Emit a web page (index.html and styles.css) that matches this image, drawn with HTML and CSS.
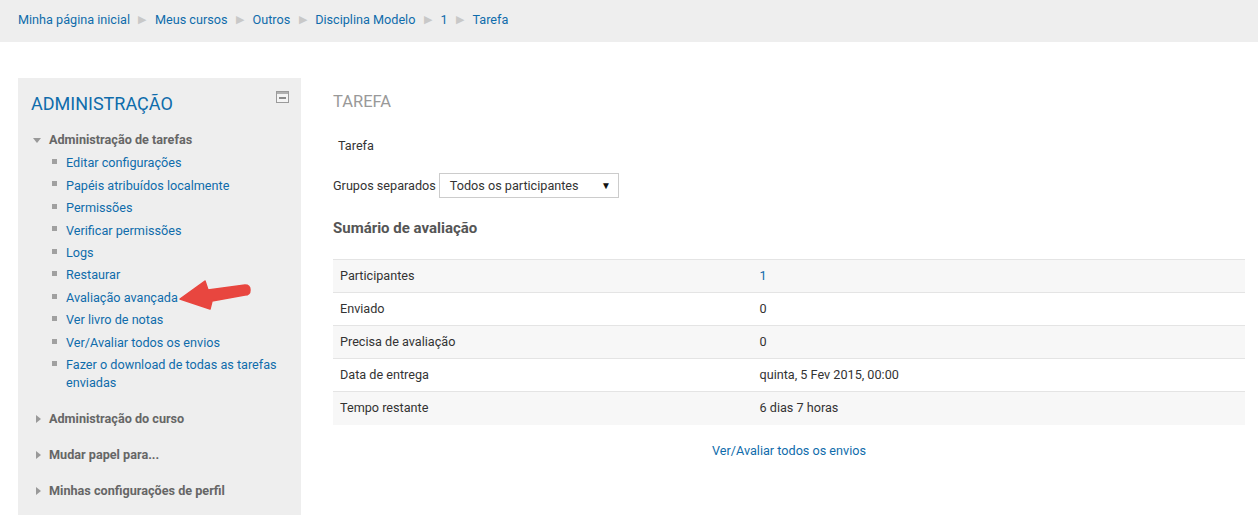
FILE: index.html
```html
<!DOCTYPE html>
<html lang="pt">
<head>
<meta charset="utf-8">
<title>Tarefa</title>
<link rel="stylesheet" href="styles.css">
</head>
<body>
<header class="navbar">
  <nav class="breadcrumb">
    <a href="#">Minha página inicial</a><span class="sep">&#9654;</span>
    <a href="#">Meus cursos</a><span class="sep">&#9654;</span>
    <a href="#">Outros</a><span class="sep">&#9654;</span>
    <a href="#">Disciplina Modelo</a><span class="sep">&#9654;</span>
    <a href="#">1</a><span class="sep">&#9654;</span>
    <a href="#">Tarefa</a>
  </nav>
</header>
<div class="page">
  <aside class="block">
    <div class="block-head">
      <h2 class="block-title">Administração</h2>
      <svg class="block-hide" width="13" height="12" viewBox="0 0 13 12"><rect x="0.5" y="0.5" width="12" height="11" fill="#f4f4f4" stroke="#9a9a9a"/><rect x="1" y="1" width="11" height="2" fill="#b0b0b0"/><rect x="3" y="6" width="7" height="2" fill="#8a8a8a"/></svg>
    </div>
    <ul class="tree">
      <li class="branch open">
        <span class="branch-label"><span class="tri down"></span>Administração de tarefas</span>
        <ul class="leaves">
          <li><a href="#">Editar configurações</a></li>
          <li><a href="#">Papéis atribuídos localmente</a></li>
          <li><a href="#">Permissões</a></li>
          <li><a href="#">Verificar permissões</a></li>
          <li><a href="#">Logs</a></li>
          <li><a href="#">Restaurar</a></li>
          <li class="annotated"><a href="#">Avaliação avançada</a>
            <svg class="arrow" width="82" height="40" viewBox="0 0 82 40"><path d="M8 26 L33 8 L36 17 L73 12 Q78 12 78 17 Q78 22 73 22 L40 28 L38 36 Z" fill="#e8463f" stroke="#e8463f" stroke-width="1.5" stroke-linejoin="round"/></svg>
          </li>
          <li><a href="#">Ver livro de notas</a></li>
          <li><a href="#">Ver/Avaliar todos os envios</a></li>
          <li><a href="#">Fazer o download de todas as tarefas enviadas</a></li>
        </ul>
      </li>
      <li class="branch"><span class="branch-label"><span class="tri right"></span>Administração do curso</span></li>
      <li class="branch"><span class="branch-label"><span class="tri right"></span>Mudar papel para...</span></li>
      <li class="branch"><span class="branch-label"><span class="tri right"></span>Minhas configurações de perfil</span></li>
    </ul>
  </aside>
  <main class="main">
    <h1 class="page-title">Tarefa</h1>
    <p class="intro">Tarefa</p>
    <div class="groups">
      <label class="groups-label">Grupos separados</label>
      <div class="select"><span>Todos os participantes</span><span class="caret">&#9660;</span></div>
    </div>
    <h3 class="summary-title">Sumário de avaliação</h3>
    <table class="summary">
      <tr><td>Participantes</td><td><a href="#">1</a></td></tr>
      <tr><td>Enviado</td><td>0</td></tr>
      <tr><td>Precisa de avaliação</td><td>0</td></tr>
      <tr><td>Data de entrega</td><td>quinta, 5 Fev 2015, 00:00</td></tr>
      <tr><td>Tempo restante</td><td>6 dias 7 horas</td></tr>
    </table>
    <div class="view-all"><a href="#">Ver/Avaliar todos os envios</a></div>
  </main>
</div>
</body>
</html>
```
FILE: styles.css
```css
html, body {
  margin: 0;
  padding: 0;
  background: #fff;
}
body {
  font-family: Roboto, "Liberation Sans", Arial, sans-serif;
  font-size: 12.65px;
  color: #333;
  width: 1258px;
  overflow: hidden;
}
a {
  color: #0f6cab;
  text-decoration: none;
}
.navbar {
  background: #eeeeee;
  height: 42px;
  padding: 0 18px;
  display: flex;
  align-items: center;
  box-sizing: border-box;
}
.breadcrumb {
  display: flex;
  align-items: center;
  line-height: 18px;
  margin-top: -2px;
}
.sep {
  color: #c8c8c8;
  font-size: 11px;
  margin: 0 8.5px;
}
.page {
  display: flex;
  gap: 32px;
  padding: 36px 13px 0 18px;
}
.block {
  width: 283px;
  flex: none;
  background: #eeeeee;
  padding: 13px 13px 10px 13px;
  box-sizing: border-box;
  height: 437px;
}
.block-head {
  display: flex;
  justify-content: space-between;
  align-items: flex-start;
}
.block-title {
  margin: 0;
  font-size: 18px;
  font-weight: 400;
  text-transform: uppercase;
  color: #0f6cab;
  line-height: 26px;
}
.block-hide {
  margin: 0 -1px 0 0;
}
.tree, .leaves {
  list-style: none;
  margin: 0;
  padding: 0;
}
.tree {
  margin-top: 14px;
}
.branch-label {
  display: flex;
  align-items: center;
  font-weight: 700;
  color: #666;
  line-height: 18px;
  margin-left: 2px;
}
.tri {
  display: inline-block;
  width: 0;
  height: 0;
}
.tri.down {
  border-left: 4.5px solid transparent;
  border-right: 4.5px solid transparent;
  border-top: 5px solid #999;
  margin-right: 8px;
}
.tri.right {
  border-top: 4.5px solid transparent;
  border-bottom: 4.5px solid transparent;
  border-left: 5px solid #999;
  margin-left: 3px;
  margin-right: 8px;
}
.branch {
  padding: 0 0 18px 0;
}
.branch.open {
  padding-bottom: 16px;
}
.branch:last-child {
  padding-bottom: 0;
}
.leaves {
  margin-top: 3px;
}
.leaves li {
  position: relative;
  padding: 2.2px 0 2.25px 35px;
  line-height: 18px;
}
.leaves li::before {
  content: "";
  position: absolute;
  left: 21px;
  top: 7px;
  width: 5px;
  height: 5px;
  background: #a0a0a0;
}
.annotated .arrow {
  position: absolute;
  left: 141px;
  top: -14px;
}
.main {
  flex: 1;
  min-width: 0;
}
.page-title {
  margin: 13px 0 0 0;
  font-size: 16.5px;
  font-weight: 400;
  text-transform: uppercase;
  color: #999;
  line-height: 22px;
}
.intro {
  margin: 24px 0 0 5px;
  line-height: 18px;
}
.groups {
  display: flex;
  align-items: center;
  margin-top: 18px;
}
.groups-label {
  margin-right: 3px;
}
.select {
  width: 180px;
  height: 25px;
  box-sizing: border-box;
  border: 1px solid #ccc;
  display: flex;
  align-items: center;
  justify-content: space-between;
  padding: 0 7px 0 10px;
  background: #fff;
  color: #333;
}
.caret {
  font-size: 10px;
  color: #111;
}
.summary-title {
  margin: 20px 0 0 0;
  font-size: 15px;
  font-weight: 700;
  color: #555;
  line-height: 20px;
}
.summary {
  width: 100%;
  border-collapse: collapse;
  margin-top: 21px;
}
.summary td {
  border-top: 1px solid #e4e4e4;
  padding: 0 7px;
  height: 33px;
  box-sizing: border-box;
  line-height: 18px;
}
.summary td:first-child {
  width: 46%;
}
.summary tr:nth-child(odd) td {
  background: #f7f7f7;
}
.view-all {
  text-align: center;
  margin-top: 17px;
  line-height: 18px;
}
```
